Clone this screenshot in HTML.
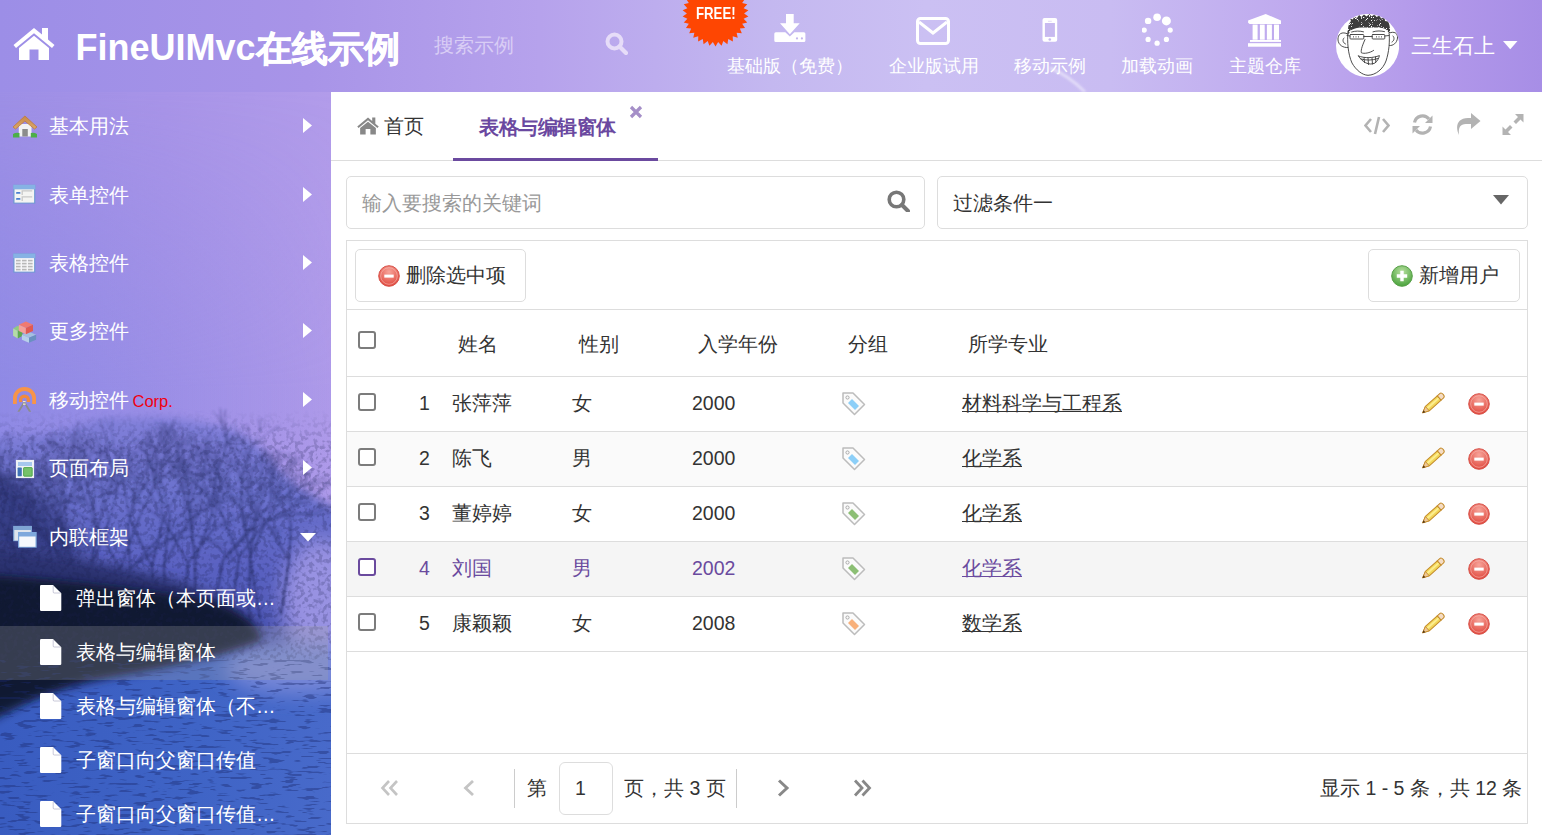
<!DOCTYPE html>
<html><head><meta charset="utf-8">
<style>
*{box-sizing:border-box;margin:0;padding:0}
html,body{width:1542px;height:835px;overflow:hidden;background:#fff}
body{font-family:"Liberation Sans",sans-serif;position:relative;color:#333}
.a{position:absolute;white-space:nowrap}
#hdr{left:0;top:0;width:1542px;height:92px;background:linear-gradient(90deg,#9c8ee7 0%,#a894e8 20%,#b6a2ec 35%,#c4b8f0 50%,#cbc0f3 60%,#c9bcf2 72%,#bea8ee 85%,#b298ea 93%,#a78ee6 100%)}
#side{left:0;top:0;width:331px;height:835px;overflow:hidden}
#hdr{z-index:2}
#main{left:331px;top:92px;width:1211px;height:743px;background:#fff}
.hl{color:#fff;font-size:17.6px;line-height:20px}
.si{color:#fff;font-size:19.5px;line-height:22px}
.t{font-size:19.5px;line-height:22px;color:#333}
.bd{border:1px solid #ddd}
</style></head><body>
<!-- HEADER -->
<div id="hdr" class="a">
  <svg class="a" style="left:13px;top:27px" width="42" height="34" viewBox="0 0 42 34"><path d="M21 1 L0.5 18 L3 21 L21 6.2 L39 21 L41.5 18 L35 12.6 L35 1 L29 1 L29 7.5 Z" fill="#fff"/><path d="M6 21 L21 8.8 L36 21 L36 33 L25.5 33 L25.5 22.5 L16.5 22.5 L16.5 33 L6 33 Z" fill="#fff"/></svg>
  <div class="a" style="left:75.5px;top:28px;font-size:36px;line-height:40px;font-weight:bold;color:#fff">FineUIMvc<span style="-webkit-text-stroke:0.6px #fff;position:relative;top:0.5px">在线示例</span></div>
  <div class="a" style="left:434px;top:34px;font-size:19.5px;line-height:22px;color:#d9cdf5">搜索示例</div>
  <svg class="a" style="left:605px;top:32px" width="23" height="23" viewBox="0 0 23 23"><circle cx="9.5" cy="9.5" r="7" stroke="#e6dcf8" stroke-width="4" fill="none"/><path d="M14.5 14.5 L21 21" stroke="#e6dcf8" stroke-width="4.2" stroke-linecap="round"/></svg>
  <svg class="a" style="left:1030px;top:60px" width="70" height="32" viewBox="0 0 70 32"><path d="M20 8 C35 14 45 22 55 32" stroke="#fff" stroke-width="3" fill="none" opacity="0.45" style="filter:blur(1px)"/></svg>
  <!-- FREE badge -->
  <svg class="a" style="left:682px;top:-21px" width="67" height="69" viewBox="0 0 67 69"><polygon points="33.50,1.40 36.14,5.92 39.56,1.96 41.33,6.89 45.42,3.63 46.25,8.80 50.87,6.34 50.74,11.58 55.73,10.01 54.64,15.13 59.83,14.51 57.82,19.34 63.04,19.69 60.17,24.07 65.24,25.37 61.61,29.14 66.36,31.36 62.10,34.40 66.36,37.44 61.61,39.66 65.24,43.43 60.17,44.73 63.04,49.11 57.82,49.46 59.83,54.29 54.64,53.67 55.73,58.79 50.74,57.22 50.87,62.46 46.25,60.00 45.42,65.17 41.33,61.91 39.56,66.84 36.14,62.88 33.50,67.40 30.86,62.88 27.44,66.84 25.67,61.91 21.58,65.17 20.75,60.00 16.13,62.46 16.26,57.22 11.27,58.79 12.36,53.67 7.17,54.29 9.18,49.46 3.96,49.11 6.83,44.73 1.76,43.43 5.39,39.66 0.64,37.44 4.90,34.40 0.64,31.36 5.39,29.14 1.76,25.37 6.83,24.07 3.96,19.69 9.18,19.34 7.17,14.51 12.36,15.13 11.27,10.01 16.26,11.58 16.13,6.34 20.75,8.80 21.58,3.63 25.67,6.89 27.44,1.96 30.86,5.92" fill="#fe4602"/></svg>
  <div class="a" style="left:696px;top:4px;font-size:16.5px;line-height:18px;font-weight:bold;color:#fff;transform:scaleX(0.8);transform-origin:0 0">FREE!</div>
  <!-- nav icons -->
  <svg class="a" style="left:774px;top:13px" width="32" height="30" viewBox="0 0 32 30"><path d="M12 1 H19.7 V10.3 H25.7 L15.85 21.3 L6 10.3 H12 Z" fill="#fff"/><path d="M1.8 19.2 H11.3 L15.85 23.6 L20.4 19.2 H29.9 Q31.4 19.2 31.4 20.7 V27.5 Q31.4 29 29.9 29 H1.8 Q0.3 29 0.3 27.5 V20.7 Q0.3 19.2 1.8 19.2 Z" fill="#fff"/><circle cx="23" cy="25.4" r="1.1" fill="#c4b6ee"/><circle cx="27.9" cy="25.4" r="1.1" fill="#c4b6ee"/></svg>
  <div class="a hl" style="left:727px;top:56px">基础版（免费）</div>
  <svg class="a" style="left:916px;top:17px" width="34" height="28" viewBox="0 0 34 28"><rect x="1.5" y="1.5" width="31" height="25" rx="3" stroke="#fff" stroke-width="3" fill="none"/><path d="M3 5 L17 16 L31 5" stroke="#fff" stroke-width="3" fill="none"/></svg>
  <div class="a hl" style="left:889px;top:56px">企业版试用</div>
  <svg class="a" style="left:1042px;top:17px" width="16" height="26" viewBox="0 0 16 26"><path d="M2.5 1 H13.2 Q15.2 1 15.2 3 V22.7 Q15.2 24.7 13.2 24.7 H2.5 Q0.5 24.7 0.5 22.7 V3 Q0.5 1 2.5 1 Z" fill="#fff"/><rect x="2.9" y="6" width="10" height="13.9" fill="#c8baf0"/><circle cx="7.8" cy="22.5" r="1.3" fill="#c8baf0"/><rect x="6" y="3.8" width="3.8" height="0.9" fill="#e0d8f6"/></svg>
  <div class="a hl" style="left:1014px;top:56px">移动示例</div>
  <svg class="a" style="left:1142px;top:13px" width="32" height="34" viewBox="0 0 32 34"><g fill="#fff"><circle cx="15.1" cy="4.2" r="3.8"/><circle cx="24.4" cy="7.9" r="4.5"/><circle cx="28.2" cy="17.1" r="2.6"/><circle cx="24.4" cy="26.4" r="2.6"/><circle cx="15.1" cy="30.2" r="2.6"/><circle cx="6.1" cy="26.4" r="2.6"/><circle cx="2.2" cy="17.1" r="2.6"/><circle cx="6.1" cy="7.9" r="3.2"/></g></svg>
  <div class="a hl" style="left:1121px;top:56px">加载动画</div>
  <svg class="a" style="left:1247px;top:13px" width="35" height="35" viewBox="0 0 35 35"><g fill="#fff"><path d="M1.1 7.6 L18.7 1 L34 7.6 V10.6 Q34 11.1 33.5 11.1 H2.6 L1.1 9.8 Z"/><rect x="5.6" y="11.6" width="5" height="15.1"/><rect x="12.9" y="11.6" width="4.8" height="15.1"/><rect x="19.9" y="11.6" width="5" height="15.1"/><rect x="27" y="11.6" width="5" height="15.1"/><rect x="3" y="27" width="31" height="1.9"/><rect x="1" y="30.2" width="33" height="3.5"/></g></svg>
  <div class="a hl" style="left:1229px;top:56px">主题仓库</div>
  <!-- avatar -->
  <svg class="a" style="left:1336px;top:14px" width="63" height="63" viewBox="0 0 63 63"><defs><clipPath id="avc"><circle cx="31.6" cy="31.5" r="31.6"/></clipPath></defs>
<circle cx="31.6" cy="31.5" r="31.6" fill="#fff"/><g clip-path="url(#avc)">
<g fill="none" stroke="#3a3a3a" stroke-width="0.9" stroke-linecap="round" stroke-linejoin="round">
<path d="M12 17 C11 28 12 40 16 49 C20 56 26 61 32 61.3 C40 61 47 55 50 47 C53 38 54 28 53 17"/>
<path d="M11.8 20 C6 17 1.5 20 2 26 C2.5 31 7 34 12 33.5 M8 24 C6 26 7 29 9.5 30"/>
<path d="M53.5 19 C58 17 62 19 61.5 24 C61 29 57 32 53.5 31.5 M57 22 C59 24 58 27 56 28"/>
<path d="M15.6 18 C19 16.8 24 16.8 27.5 17.8 M37 17.8 C41 16.6 45 16.8 48.5 17.6"/>
<rect x="14" y="20.5" width="13.8" height="4.5" rx="0.8"/>
<rect x="36.2" y="20.5" width="12.6" height="4.5" rx="0.8"/>
<path d="M27.8 22.5 H36.2 M14 22 L11 21.5 M48.8 22 L53 21.5"/>
<path d="M29 25.5 C27 30 24.5 36 25.4 38.8 C28 40 34 39 37.6 36.4"/>
<path d="M22.5 42 C26 48 33 52 39 49 C41.5 47 43 44 43.4 41.6 C37 44 29 44.5 22.5 42 Z"/>
<path d="M25 45 C30 46.5 36 46.5 42 44.5 M28 43.5 L28.5 48.5 M32 44 L32.5 50.5 M36 44 L36.5 50 M39.5 43 L39.8 48"/>
</g>
<defs><filter id="hairf" x="0" y="0" width="100%" height="100%"><feTurbulence type="fractalNoise" baseFrequency="0.9" numOctaves="1" seed="5" result="n"/><feColorMatrix in="n" type="matrix" values="0 0 0 0 1  0 0 0 0 1  0 0 0 0 1  0 0 0 -10 3.9" result="w"/><feComposite in="w" in2="SourceGraphic" operator="in" result="wm"/><feMerge><feMergeNode in="SourceGraphic"/><feMergeNode in="wm"/></feMerge></filter></defs>
<path d="M12.5 21 C11 14 13 9 15 7 L14 4.5 L17 5.5 L18 2.5 L21 4 L23 1 L25.5 3 L28 0.5 L30.5 2.5 L33.5 0 L35.5 2.5 L38.5 0.5 L40.5 3 L43.5 1.5 L45 4.5 L48.5 3.5 L49 7 L52 7.5 C54 11 54.5 16 53.5 21 C52 16.5 50 14.5 46 14 C40 13 34 14 28 13.5 C22 13 17 14.5 14.5 16.5 C13.5 18 13 19.5 12.5 21 Z" fill="#3c3c3c" filter="url(#hairf)"/>
</g><g fill="#888"><rect x="17" y="22" width="1" height="1.6"/><rect x="19.5" y="22" width="1" height="1.6"/><rect x="22" y="22" width="1" height="1.6"/><rect x="40" y="22" width="1" height="1.6"/><rect x="42.5" y="22" width="1" height="1.6"/><rect x="45" y="22" width="1" height="1.6"/></g>
</svg>
  <div class="a" style="left:1411px;top:34px;font-size:20.7px;line-height:23px;color:#fff">三生石上</div>
  <svg class="a" style="left:1503px;top:41px" width="15" height="9" viewBox="0 0 15 9"><path d="M0 0 H14.5 L7.25 8.2 Z" fill="#fff"/></svg>
</div>

<!-- SIDEBAR -->
<div id="side" class="a">
  <svg class="a" style="left:0;top:92px" width="331" height="743" viewBox="0 92 331 743">
    <defs>
      <linearGradient id="sg" x1="0" y1="0" x2="1" y2="0">
        <stop offset="0" stop-color="#9d8fe6"/>
        <stop offset="0.5" stop-color="#a894e8"/>
        <stop offset="1" stop-color="#b29cea"/>
      </linearGradient>
      <linearGradient id="sgb" x1="0" y1="0" x2="1" y2="0">
        <stop offset="0" stop-color="#8a88e4" stop-opacity="0.75"/>
        <stop offset="1" stop-color="#8a88e4" stop-opacity="0.1"/>
      </linearGradient>
      <linearGradient id="sgm" x1="0" y1="0" x2="0" y2="1">
        <stop offset="0" stop-color="#fff" stop-opacity="0"/>
        <stop offset="0.4" stop-color="#fff" stop-opacity="1"/>
        <stop offset="1" stop-color="#fff" stop-opacity="1"/>
      </linearGradient>
      <mask id="sgmk"><rect x="0" y="92" width="331" height="743" fill="url(#sgm)"/></mask>
      <linearGradient id="crown" x1="0" y1="0" x2="0" y2="1">
        <stop offset="0" stop-color="#8280da"/>
        <stop offset="0.3" stop-color="#6c72cd"/>
        <stop offset="0.65" stop-color="#5860c0"/>
        <stop offset="1" stop-color="#4650aa"/>
      </linearGradient>
      <linearGradient id="road" x1="0" y1="0" x2="1" y2="0">
        <stop offset="0" stop-color="#395cc0"/>
        <stop offset="0.6" stop-color="#3f64c6"/>
        <stop offset="1" stop-color="#486aca"/>
      </linearGradient>
      <filter id="bl" x="-30%" y="-30%" width="160%" height="160%"><feGaussianBlur stdDeviation="10"/></filter>
      <filter id="bl2" x="-30%" y="-30%" width="160%" height="160%"><feGaussianBlur stdDeviation="6"/></filter>
      <filter id="bl05" x="-5%" y="-5%" width="110%" height="110%"><feGaussianBlur stdDeviation="0.8"/></filter>
      <filter id="bl3" x="-30%" y="-30%" width="160%" height="160%"><feGaussianBlur stdDeviation="4"/></filter>
      <filter id="speck" x="0" y="0" width="100%" height="100%">
        <feTurbulence type="fractalNoise" baseFrequency="0.22" numOctaves="2" seed="7" result="n"/>
        <feColorMatrix in="n" type="matrix" values="0 0 0 0 0  0 0 0 0 0  0 0 0 0 0  0 0 0 -6 3.1" result="a"/>
        <feComposite in="SourceGraphic" in2="a" operator="in"/>
      </filter>
      <filter id="speck2" x="0" y="0" width="100%" height="100%">
        <feTurbulence type="fractalNoise" baseFrequency="0.06 0.35" numOctaves="2" seed="11" result="n"/>
        <feColorMatrix in="n" type="matrix" values="0 0 0 0 0  0 0 0 0 0  0 0 0 0 0  0 0 0 -12 5.0" result="a"/>
        <feComposite in="SourceGraphic" in2="a" operator="in"/>
      </filter>
      <linearGradient id="fadeTop" x1="0" y1="0" x2="0" y2="1">
        <stop offset="0" stop-color="#fff" stop-opacity="0"/>
        <stop offset="0.15" stop-color="#fff" stop-opacity="1"/>
        <stop offset="1" stop-color="#fff" stop-opacity="1"/>
      </linearGradient>
      <mask id="mk"><rect x="0" y="410" width="331" height="250" fill="url(#fadeTop)"/></mask>
    </defs>
    <rect x="0" y="92" width="331" height="743" fill="url(#sg)"/>
    <rect x="0" y="92" width="331" height="743" fill="url(#sgb)" mask="url(#sgmk)"/>
    <rect x="0" y="640" width="331" height="200" fill="url(#road)"/>
    <g filter="url(#bl3)">
      <path d="M-10 440 C10 432 40 438 70 428 C90 420 110 416 140 418 C165 415 190 420 215 425 C240 430 258 442 275 465 C292 485 315 500 340 510 L340 650 L-10 660 Z" fill="url(#crown)"/>
    </g>
    <g filter="url(#bl)">
      <ellipse cx="322" cy="600" rx="40" ry="62" fill="#9892e2"/>
      <ellipse cx="300" cy="668" rx="75" ry="26" fill="#7888d8"/>
      <path d="M-20 470 C30 480 70 520 90 560 L-20 565 Z" fill="#383f88"/>
    </g>
    <g opacity="0.55" filter="url(#bl05)"><path d="M50 498L61 497M61 497L69 495M61 497L69 498M50 498L55 486M55 486L60 479M55 486L60 480M55 486L60 479M32 493L21 487M21 487L11 484M21 487L12 487M32 493L33 481M33 481L33 471M33 481L39 475M20 491L9 483M9 483L2 479M9 483L3 478M20 491L11 480M11 480L11 471M11 480L11 469M31 484L22 472M22 472L15 463M22 472L16 464M31 484L40 471M40 471L39 459M40 471L39 459M32 485L27 470M27 470L30 460M27 470L25 460M27 470L31 458M32 485L34 472M34 472L30 464M34 472L40 465M4 498L-1 489M-1 489L-5 483M-1 489L-2 482M4 498L6 485M6 485L12 480M6 485L12 478M6 485L3 478M7 498L7 488M7 488L9 481M7 488L5 481M7 498L3 486M3 486L-3 480M3 486L-4 480M-25 495L-41 490M-41 490L-52 491M-41 490L-53 493M-25 495L-30 483M-30 483L-31 473M-30 483L-28 473M-25 495L-38 489M-38 489L-47 485M-38 489L-48 485M-8 491L-11 479M-11 479L-11 471M-11 479L-17 474M-8 491L-8 478M-8 478L-7 469M-8 478L-8 468M-8 491L-2 482M-2 482L3 475M-2 482L2 476M-13 498L-20 490M-20 490L-27 486M-20 490L-26 485M-20 490L-23 483M-13 498L-12 488M-12 488L-9 481M-12 488L-9 481M-9 495L-17 485M-17 485L-22 478M-17 485L-23 479M-9 495L-6 482M-6 482L-7 474M-6 482L-8 473M-9 495L-6 482M-6 482L-5 472M-6 482L1 474M-6 482L1 476M-2 497L10 490M10 490L17 485M10 490L15 481M10 490L19 486M-2 497L8 487M8 487L19 486M8 487L11 479M8 487L16 484M20 477L19 462M19 462L24 454M19 462L19 451M20 477L33 468M33 468L37 457M33 468L42 461M7 480L0 468M0 468L-5 461M0 468L-4 460M7 480L8 466M8 466L13 459M8 466L13 457M16 475L9 459M9 459L10 448M9 459L0 449M16 475L23 462M23 462L21 451M23 462L33 457M9 475L11 460M11 460L7 451M11 460L13 450M9 475L3 460M3 460L5 449M3 460L-3 452M-4 478L-5 459M-5 459L-11 446M-5 459L-4 444M-4 478L-14 461M-14 461L-25 454M-14 461L-21 450M-62 509L-78 507M-78 507L-87 505M-78 507L-88 506M-78 507L-86 512M-62 509L-74 502M-74 502L-84 500M-74 502L-83 500M-60 516L-70 511M-70 511L-78 508M-70 511L-75 505M-60 516L-71 517M-71 517L-78 517M-71 517L-78 517M-60 516L-70 522M-70 522L-77 528M-70 522L-79 525M-66 498L-77 485M-77 485L-85 480M-77 485L-88 483M-66 498L-76 487M-76 487L-78 475M-76 487L-76 476M-76 487L-86 485M-52 494L-63 486M-63 486L-67 477M-63 486L-71 480M-52 494L-55 482M-55 482L-56 472M-55 482L-52 473M-52 494L-49 479M-49 479L-50 468M-49 479L-48 470M-46 488L-38 474M-38 474L-36 465M-38 474L-28 470M-46 488L-37 473M-37 473L-25 469M-37 473L-34 462M-37 473L-32 463M61 500L73 497M73 497L82 501M73 497L81 494M73 497L80 491M61 500L76 503M76 503L86 500M76 503L86 497M64 502L78 500M78 500L87 505M78 500L86 495M64 502L80 503M80 503L91 504M80 503L88 510M50 494L50 481M50 481L46 474M50 481L47 473M50 481L45 473M50 494L55 483M55 483L60 477M55 483L56 474M64 503L75 491M75 491L77 480M75 491L86 489M64 503L77 498M77 498L86 501M77 498L86 495M77 498L86 500M37 491L39 477M39 477L46 470M39 477L43 468M37 491L44 478M44 478L50 469M44 478L49 469M40 495L44 484M44 484L43 476M44 484L51 479M44 484L47 478M40 495L51 487M51 487L54 477M51 487L55 478M49 489L53 474M53 474L49 466M53 474L60 465M49 489L55 475M55 475L55 464M55 475L63 468M45 491L51 479M51 479L49 469M51 479L53 470M45 491L55 482M55 482L61 475M55 482L59 473M55 482L65 481M53 496L68 495M68 495L77 502M68 495L77 499M53 496L62 483M62 483L69 474M62 483L68 474M62 483L66 473M-30 497L-34 479M-34 479L-34 467M-34 479L-38 467M-30 497L-43 486M-43 486L-48 477M-43 486L-46 475M-32 506L-40 493M-40 493L-50 488M-40 493L-48 488M-40 493L-40 483M-32 506L-47 503M-47 503L-57 499M-47 503L-54 497M-39 514L-52 505M-52 505L-57 494M-52 505L-62 498M-39 514L-54 515M-54 515L-65 515M-54 515L-63 512M-34 504L-51 499M-51 499L-62 493M-51 499L-61 492M-34 504L-45 494M-45 494L-53 487M-45 494L-55 494M-45 494L-53 487M-2 496L4 483M4 483L13 477M4 483L12 477M-2 496L-0 483M-0 483L4 475M-0 483L-3 474M-2 496L-10 485M-10 485L-18 480M-10 485L-16 478M-10 485L-11 476M-4 495L-11 482M-11 482L-17 475M-11 482L-12 472M-11 482L-16 474M-4 495L-1 483M-1 483L4 476M-1 483L-2 474M-20 506L-34 502M-34 502L-40 494M-34 502L-43 505M-20 506L-33 507M-33 507L-43 508M-33 507L-42 506M-22 517L-35 518M-35 518L-43 523M-35 518L-44 514M-35 518L-43 519M-22 517L-33 513M-33 513L-41 515M-33 513L-38 506M-33 513L-39 505M-22 517L-35 522M-35 522L-43 526M-35 522L-40 529M17 492L26 484M26 484L34 483M26 484L30 477M17 492L13 481M13 481L15 474M13 481L6 476M13 481L12 474M20 493L25 481M25 481L31 475M25 481L30 473M25 481L33 477M20 493L26 482M26 482L26 474M26 482L27 475M26 482L28 474M41 483L24 481M24 481L15 476M24 481L15 475M41 483L26 475M26 475L15 476M26 475L18 466M50 481L45 467M45 467L36 463M45 467L45 456M50 481L39 471M39 471L31 467M39 471L30 467M54 475L57 460M57 460L57 449M57 460L65 454M54 475L39 466M39 466L35 456M39 466L31 458M58 469L64 453M64 453L73 447M64 453L62 442M58 469L55 454M55 454L46 446M55 454L51 442M58 469L46 456M46 456L40 445M46 456L45 444M46 456L41 444M27 493L21 481M21 481L23 472M21 481L16 473M27 493L28 479M28 479L34 471M28 479L28 471M25 494L27 482M27 482L23 474M27 482L24 472M25 494L12 485M12 485L1 482M12 485L7 475M47 488L43 474M43 474L39 466M43 474L41 465M47 488L53 473M53 473L55 463M53 473L59 463M47 488L48 474M48 474L44 464M48 474L43 467M42 487L46 472M46 472L43 462M46 472L54 464M42 487L39 475M39 475L39 465M39 475L34 469M45 461L53 447M53 447L62 441M53 447L56 436M45 461L49 444M49 444L54 435M49 444L49 432M37 466L26 454M26 454L24 444M26 454L15 453M37 466L32 449M32 449L33 436M32 449L34 438M32 449L31 436M69 458L76 437M76 437L77 421M76 437L79 421M69 458L54 446M54 446L41 442M54 446L44 438M69 458L62 439M62 439L61 424M62 439L52 430M79 463L88 449M88 449L96 440M88 449L92 437M79 463L93 453M93 453L95 442M93 453L105 449M93 453L105 452M79 463L90 452M90 452L91 442M90 452L98 446M75 459L71 442M71 442L68 430M71 442L75 431M75 459L86 442M86 442L96 432M86 442L100 437M75 459L86 444M86 444L96 437M86 444L92 431M84 476L87 461M87 461L85 450M87 461L93 454M84 476L98 471M98 471L108 473M98 471L109 473M88 481L104 478M104 478L115 475M104 478L113 480M104 478L111 469M88 481L97 472M97 472L102 466M97 472L106 469M-4 466L-8 448M-8 448L-14 439M-8 448L-4 438M-8 448L-8 435M-4 466L0 444M0 444L9 434M0 444L7 432M-1 463L8 444M8 444L14 431M8 444L9 431M-1 463L-17 450M-17 450L-26 439M-17 450L-20 436M-17 450L-19 437M-1 478L3 463M3 463L9 454M3 463L-0 452M-1 478L-5 463M-5 463L-13 455M-5 463L-11 455M-1 478L-3 461M-3 461L5 450M-3 461L-9 452M-3 461L-7 449M-10 485L-14 470M-14 470L-16 462M-14 470L-9 461M-10 485L-19 474M-19 474L-21 465M-19 474L-30 472M-9 543L-23 553M-23 553L-29 563M-23 553L-32 559M-9 543L-24 549M-24 549L-31 558M-24 549L-34 556M-24 549L-29 558M-5 518L-15 509M-15 509L-18 500M-15 509L-23 506M-15 509L-22 508M-5 518L-10 506M-10 506L-11 498M-10 506L-10 497M16 493L6 482M6 482L-2 475M6 482L5 471M16 493L7 485M7 485L4 477M7 485L-0 481M7 485L2 480M18 489L19 475M19 475L13 466M19 475L21 465M19 475L18 464M18 489L5 482M5 482L-5 482M5 482L-2 472M28 488L24 474M24 474L16 468M24 474L17 469M24 474L15 469M28 488L37 478M37 478L46 475M37 478L40 471M28 488L25 474M25 474L25 466M25 474L27 464M6 491L3 475M3 475L-5 467M3 475L-7 468M6 491L-11 488M-11 488L-24 489M-11 488L-22 485M-11 488L-21 482M22 488L26 474M26 474L33 466M26 474L24 464M26 474L28 463M22 488L25 476M25 476L30 471M25 476L24 467M25 476L29 469M19 479L15 462M15 462L9 452M15 462L11 452M19 479L5 475M5 475L-4 470M5 475L-5 473M5 475L-4 472M11 487L-6 483M-6 483L-18 484M-6 483L-16 485M11 487L-3 480M-3 480L-9 474M-3 480L-14 478M71 464L82 455M82 455L86 447M82 455L87 448M71 464L70 450M70 450L64 443M70 450L75 440M54 463L51 447M51 447L46 436M51 447L52 435M54 463L45 450M45 450L37 444M45 450L35 445M78 468L78 454M78 454L76 445M78 454L79 445M78 468L92 466M92 466L101 464M92 466L99 471M42 483L32 476M32 476L28 469M32 476L26 471M42 483L30 477M30 477L22 479M30 477L22 473M43 480L28 476M28 476L18 469M28 476L16 477M28 476L19 471M43 480L33 472M33 472L27 464M33 472L27 463M64 480L64 466M64 466L60 458M64 466L68 456M64 480L74 470M74 470L82 466M74 470L80 463M33 484L30 472M30 472L33 465M30 472L29 463M33 484L34 471M34 471L34 463M34 471L31 462M30 483L19 474M19 474L9 474M19 474L9 472M19 474L14 464M30 483L16 477M16 477L6 474M16 477L9 472M30 483L26 469M26 469L24 460M26 469L22 459M70 472L74 458M74 458L72 447M74 458L70 448M70 472L64 457M64 457L56 451M64 457L57 450M50 475L46 462M46 462L41 454M46 462L39 456M50 475L44 461M44 461L48 452M44 461L37 453M113 472L118 459M118 459L116 449M118 459L126 451M113 472L120 459M120 459L121 448M120 459L123 447M120 459L130 455M100 472L101 459M101 459L98 449M101 459L100 448M100 472L91 462M91 462L85 456M91 462L89 454M100 472L98 459M98 459L102 450M98 459L103 452M118 472L119 457M119 457L126 447M119 457L124 446M119 457L126 449M118 472L127 461M127 461L137 458M127 461L132 452M114 472L106 459M106 459L107 449M106 459L103 450M114 472L108 458M108 458L106 449M108 458L108 447M74 465L72 450M72 450L74 439M72 450L77 441M74 465L57 461M57 461L44 462M57 461L48 455M91 464L82 451M82 451L78 440M82 451L71 445M91 464L84 451M84 451L81 442M84 451L74 445M81 459L87 444M87 444L83 433M87 444L85 434M81 459L78 442M78 442L80 429M78 442L71 434M78 442L69 433M80 459L64 448M64 448L51 439M64 448L52 441M64 448L52 439M80 459L82 441M82 441L84 428M82 441L78 430M125 481L138 470M138 470L148 462M138 470L143 460M138 470L141 460M125 481L136 470M136 470L140 460M136 470L146 465M114 474L124 463M124 463L132 459M124 463L130 455M114 474L108 459M108 459L108 449M108 459L100 452M121 481L135 477M135 477L144 471M135 477L146 475M121 481L129 470M129 470L136 465M129 470L136 466M113 479L121 470M121 470L127 465M121 470L129 466M113 479L113 468M113 468L111 460M113 468L113 461M117 481L130 473M130 473L139 468M130 473L139 474M130 473L135 466M117 481L117 467M117 467L120 459M117 467L116 459M210 525L225 522M225 522L234 519M225 522L232 513M225 522L233 515M210 525L224 528M224 528L235 525M224 528L232 532M201 507L206 494M206 494L208 485M206 494L208 486M201 507L202 493M202 493L200 484M202 493L203 482M201 512L213 507M213 507L216 501M213 507L219 503M213 507L221 505M201 512L209 502M209 502L208 493M209 502L213 495M197 508L192 496M192 496L192 485M192 496L187 486M197 508L200 495M200 495L207 489M200 495L201 485M200 495L208 489M217 546L227 556M227 556L229 566M227 556L234 562M217 546L230 552M230 552L235 560M230 552L240 554M217 543L229 552M229 552L232 561M229 552L234 561M217 543L231 542M231 542L239 546M231 542L240 544M155 479L169 472M169 472L178 465M169 472L172 464M169 472L180 468M155 479L171 477M171 477L180 474M171 477L180 483M147 470L151 455M151 455L160 446M151 455L148 444M147 470L163 459M163 459L176 455M163 459L175 454M163 459L170 449M148 481L156 468M156 468L163 460M156 468L165 466M148 481L147 465M147 465L146 454M147 465L148 454M147 465L141 455M147 480L154 467M154 467L161 460M154 467L163 463M147 480L149 464M149 464L155 455M149 464L150 454M203 489L218 478M218 478L228 468M218 478L231 472M218 478L226 468M203 489L219 481M219 481L230 478M219 481L226 472M191 488L203 478M203 478L209 470M203 478L211 471M191 488L196 473M196 473L205 466M196 473L205 467M191 488L184 475M184 475L182 466M184 475L184 465M210 502L219 488M219 488L225 477M219 488L225 478M210 502L225 509M225 509L233 516M225 509L234 516M210 502L228 502M228 502L240 499M228 502L238 496M207 509L211 497M211 497L219 492M211 497L209 489M207 509L212 496M212 496L213 486M212 496L214 488M206 506L218 502M218 502L226 501M218 502L225 499M206 506L218 503M218 503L226 503M218 503L225 502M206 506L220 501M220 501L228 495M220 501L230 498M43 495L34 480M34 480L34 469M34 480L29 468M43 495L27 488M27 488L15 488M27 488L15 483M54 486L43 477M43 477L35 472M43 477L35 470M54 486L41 479M41 479L32 473M41 479L37 471M41 479L33 472M54 486L46 472M46 472L46 462M46 472L49 461M69 469L60 455M60 455L57 445M60 455L56 444M69 469L61 454M61 454L50 445M61 454L50 445M78 464L75 446M75 446L74 432M75 446L81 435M78 464L81 448M81 448L77 438M81 448L88 439M72 465L70 449M70 449L63 442M70 449L67 439M72 465L75 448M75 448L72 435M75 448L70 438M72 465L61 448M61 448L47 442M61 448L49 440M83 468L84 453M84 453L88 444M84 453L78 444M83 468L69 461M69 461L58 463M69 461L62 454M69 461L62 455M93 464L100 449M100 449L101 439M100 449L109 442M100 449L97 438M93 464L105 451M105 451L114 442M105 451L114 440M105 451L117 449M93 464L103 451M103 451L112 446M103 451L112 443M178 467L195 468M195 468L208 470M195 468L207 473M178 467L195 455M195 455L202 443M195 455L202 442M178 467L192 455M192 455L204 455M192 455L206 454M192 455L202 447M156 457L162 442M162 442L171 436M162 442L162 431M156 457L158 440M158 440L155 430M158 440L166 430M158 440L162 428M176 465L180 449M180 449L184 438M180 449L189 441M180 449L186 438M176 465L179 445M179 445L173 432M179 445L184 432M165 456L163 438M163 438L161 427M163 438L169 426M165 456L174 438M174 438L182 425M174 438L171 425M174 438L173 423M165 456L167 435M167 435L172 421M167 435L176 422M148 457L151 441M151 441L149 430M151 441L148 429M148 457L135 443M135 443L122 440M135 443L130 430M196 479L209 471M209 471L220 469M209 471L215 463M196 479L211 472M211 472L216 462M211 472L221 473M185 476L193 467M193 467L200 464M193 467L195 458M185 476L181 464M181 464L178 455M181 464L178 456M184 473L179 460M179 460L176 451M179 460L174 450M184 473L192 458M192 458L203 454M192 458L191 447M192 458L190 449M167 460L183 451M183 451L196 448M183 451L190 441M183 451L194 450M167 460L172 443M172 443L176 430M172 443L182 435M164 458L167 440M167 440L177 430M167 440L166 427M164 458L171 442M171 442L168 432M171 442L169 430M164 458L178 446M178 446L188 438M178 446L190 439M178 446L189 442M154 463L172 461M172 461L183 454M172 461L183 453M172 461L183 467M154 463L167 449M167 449L179 444M167 449L179 445M152 461L158 444M158 444L168 438M158 444L163 433M152 461L164 448M164 448L165 436M164 448L174 440M133 455L147 440M147 440L160 432M147 440L155 430M133 455L148 447M148 447L152 436M148 447L156 437M115 454L112 432M112 432L113 417M112 432L105 418M115 454L105 435M105 435L98 421M105 435L101 419M111 462L106 449M106 449L105 440M106 449L109 440M111 462L100 449M100 449L90 441M100 449L95 437M111 462L96 453M96 453L90 445M96 453L89 445M149 463L146 445M146 445L145 430M146 445L142 432M149 463L141 449M141 449L143 439M141 449L138 440M141 449L137 438M152 466L139 461M139 461L130 462M139 461L130 460M152 466L139 457M139 457L132 448M139 457L130 450M139 457L131 451M152 466L146 452M146 452L137 446M146 452L141 443M146 452L142 444M152 464L156 451M156 451L152 442M156 451L158 442M156 451L160 442M152 464L145 452M145 452L139 446M145 452L137 447M152 464L155 449M155 449L153 439M155 449L163 439M155 449L162 441M157 460L148 445M148 445L148 433M148 445L148 432M157 460L160 444M160 444L166 435M160 444L159 433M158 462L151 446M151 446L140 441M151 446L148 435M151 446L152 435M158 462L152 447M152 447L143 441M152 447L141 441M215 478L221 461M221 461L226 447M221 461L230 450M215 478L219 463M219 463L219 451M219 463L214 452M219 463L214 453M224 482L230 468M230 468L232 458M230 468L240 461M224 482L228 468M228 468L232 457M228 468L231 458M224 482L233 469M233 469L242 461M233 469L239 460M187 470L197 462M197 462L207 461M197 462L207 461M187 470L195 457M195 457L197 447M195 457L196 447M173 467L164 451M164 451L153 447M164 451L166 440M173 467L163 452M163 452L153 447M163 452L162 439M173 467L178 452M178 452L177 439M178 452L179 441M132 474L128 460M128 460L129 449M128 460L128 449M132 474L120 466M120 466L112 462M120 466L115 458M125 474L119 456M119 456L122 444M119 456L119 444M125 474L110 462M110 462L107 451M110 462L106 449M110 462L106 449M128 486L121 472M121 472L115 465M121 472L111 466M128 486L115 483M115 483L108 487M115 483L110 475M121 494L105 494M105 494L94 490M105 494L93 497M121 494L108 494M108 494L100 491M108 494L99 497M108 494L101 488M128 484L112 480M112 480L100 478M112 480L100 482M112 480L100 478M128 484L130 467M130 467L131 456M130 467L130 455M263 519L279 517M279 517L286 508M279 517L291 517M263 519L273 531M273 531L276 542M273 531L281 539M273 531L280 540M263 511L278 506M278 506L287 499M278 506L287 502M278 506L290 502M263 511L278 512M278 512L289 515M278 512L287 515M278 512L286 517M262 522L273 529M273 529L280 536M273 529L281 531M262 522L273 527M273 527L280 534M273 527L279 532M273 527L282 528M234 485L245 473M245 473L255 466M245 473L255 467M234 485L245 473M245 473L250 462M245 473L255 466M221 478L226 462M226 462L225 451M226 462L232 451M221 478L214 465M214 465L216 455M214 465L209 456M211 481L205 469M205 469L199 462M205 469L204 460M211 481L198 475M198 475L192 468M198 475L189 477M211 481L212 469M212 469L213 461M212 469L206 462M205 466L206 451M206 451L204 441M206 451L209 441M206 451L205 443M205 466L207 454M207 454L206 447M207 454L202 446M214 468L226 456M226 456L235 449M226 456L235 448M214 468L226 462M226 462L233 456M226 462L237 461M177 451L169 438M169 438L171 429M169 438L166 428M177 451L185 438M185 438L194 433M185 438L193 431M167 452L169 433M169 433L175 420M169 433L163 422M167 452L161 435M161 435L162 424M161 435L166 423M161 435L156 426M167 452L160 437M160 437L151 428M160 437L162 427M183 453L182 437M182 437L182 427M182 437L189 428M183 453L190 442M190 442L197 437M190 442L188 431M184 453L180 438M180 438L174 430M180 438L173 429M184 453L177 438M177 438L173 427M177 438L168 430M170 451L153 445M153 445L141 443M153 445L141 443M170 451L168 434M168 434L171 424M168 434L162 425M168 434L159 426M177 447L171 429M171 429L176 418M171 429L160 420M177 447L165 431M165 431L155 421M165 431L154 427M206 455L208 436M208 436L216 425M208 436L217 426M206 455L218 446M218 446L228 441M218 446L230 444M218 446L230 445M206 455L205 440M205 440L198 430M205 440L210 432M183 467L168 463M168 463L157 464M168 463L159 461M168 463L160 458M183 467L166 466M166 466L158 458M166 466L155 473M225 450L236 433M236 433L247 424M236 433L235 420M225 450L227 434M227 434L232 424M227 434L225 423M225 450L227 433M227 433L222 422M227 433L224 420M205 455L196 444M196 444L195 433M196 444L193 435M205 455L194 446M194 446L187 440M194 446L185 444M194 446L190 436M273 478L277 462M277 462L278 451M277 462L281 452M273 478L263 463M263 463L264 450M263 463L257 452M273 478L267 462M267 462L264 450M267 462L256 456M267 462L270 450M270 479L280 465M280 465L285 453M280 465L280 453M270 479L272 462M272 462L268 453M272 462L274 450M262 486L267 472M267 472L272 463M267 472L267 462M262 486L268 473M268 473L276 467M268 473L272 464M268 473L273 466M262 486L273 476M273 476L274 465M273 476L276 466M273 476L275 467M242 482L238 469M238 469L229 463M238 469L234 459M242 482L235 471M235 471L227 464M235 471L234 462M272 478L272 464M272 464L269 453M272 464L272 454M272 478L276 463M276 463L283 452M276 463L279 451M272 478L278 463M278 463L289 457M278 463L276 450M262 473L261 459M261 459L262 450M261 459L266 450M261 459L268 451M262 473L268 458M268 458L278 450M268 458L264 446M268 458L264 446M261 473L269 461M269 461L274 453M269 461L278 456M261 473L251 460M251 460L242 456M251 460L243 452M276 477L289 473M289 473L299 475M289 473L294 466M276 477L287 466M287 466L295 457M287 466L296 462M276 477L287 468M287 468L296 468M287 468L296 463M297 500L313 495M313 495L324 500M313 495L323 490M297 500L311 490M311 490L323 490M311 490L320 483M305 514L320 511M320 511L330 510M320 511L329 506M320 511L329 506M305 514L317 506M317 506L320 496M317 506L326 505M317 506L326 501M305 514L319 508M319 508L324 498M319 508L324 498M222 461L227 444M227 444L233 435M227 444L222 433M222 461L231 448M231 448L231 438M231 448L240 444M216 463L210 451M210 451L204 446M210 451L211 443M216 463L217 448M217 448L219 437M217 448L212 438M190 472L183 459M183 459L176 452M183 459L174 455M190 472L174 468M174 468L166 461M174 468L168 460M188 477L182 465M182 465L180 456M182 465L182 456M188 477L187 463M187 463L190 452M187 463L191 454M187 463L192 453M191 479L178 476M178 476L169 479M178 476L170 473M178 476L168 477M191 479L188 466M188 466L182 459M188 466L180 460M191 479L180 473M180 473L177 466M180 473L171 473M190 480L178 475M178 475L170 470M178 475L170 477M190 480L181 469M181 469L174 463M181 469L179 460M181 469L173 467M305 495L314 482M314 482L319 473M314 482L322 477M314 482L325 478M305 495L314 485M314 485L322 483M314 485L322 481M313 515L327 507M327 507L337 508M327 507L332 497M313 515L327 513M327 513L335 513M327 513L333 506M327 513L335 512M313 499L323 489M323 489L328 481M323 489L331 483M323 489L331 485M313 499L324 486M324 486L332 481M324 486L324 474M324 486L328 477M304 491L307 478M307 478L312 470M307 478L305 470M304 491L306 477M306 477L304 467M306 477L311 468M217 456L210 445M210 445L205 438M210 445L211 436M217 456L226 444M226 444L233 438M226 444L236 441M211 457L200 448M200 448L190 447M200 448L191 445M211 457L198 447M198 447L192 436M198 447L193 435M253 445L268 433M268 433L277 426M268 433L280 426M253 445L260 430M260 430L261 418M260 430L258 419M260 430L269 424M228 443L226 424M226 424L216 415M226 424L225 410M228 443L221 424M221 424L226 410M221 424L221 410M228 443L221 422M221 422L220 408M221 422L213 411M209 472L209 457M209 457L202 450M209 457L210 446M209 472L208 459M208 459L202 451M208 459L208 449M202 475L198 462M198 462L200 452M198 462L198 452M202 475L192 464M192 464L182 463M192 464L188 454M192 464L182 462M202 475L188 474M188 474L179 477M188 474L178 470M188 474L179 468M218 467L212 452M212 452L206 443M212 452L206 442M212 452L205 444M218 467L220 452M220 452L217 441M220 452L227 444M208 475L200 464M200 464L201 453M200 464L193 459M208 475L192 473M192 473L181 474M192 473L185 466M208 475L203 461M203 461L203 451M203 461L201 452M203 461L198 451M236 457L231 443M231 443L234 434M231 443L225 433M236 457L236 443M236 443L238 433M236 443L231 434M248 458L244 444M244 444L243 434M244 444L236 439M244 444L245 434M248 458L243 445M243 445L246 437M243 445L239 437M248 458L255 443M255 443L264 439M255 443L265 436M249 457L244 443M244 443L238 434M244 443L235 437M249 457L250 439M250 439L247 427M250 439L248 425M290 480L300 468M300 468L309 460M300 468L301 457M290 480L301 475M301 475L308 472M301 475L308 474M283 476L288 462M288 462L285 453M288 462L295 454M283 476L290 465M290 465L296 459M290 465L295 458M290 465L299 463M275 475L271 461M271 461L274 451M271 461L273 453M275 475L278 461M278 461L286 455M278 461L279 452M275 475L270 463M270 463L270 453M270 463L262 457M293 491L304 486M304 486L312 482M304 486L307 478M293 491L304 491M304 491L309 495M304 491L311 493M279 484L284 475M284 475L289 469M284 475L289 470M279 484L282 474M282 474L285 469M282 474L284 468M293 487L305 485M305 485L314 485M305 485L313 483M305 485L313 480M293 487L302 481M302 481L308 477M302 481L308 480M293 499L302 503M302 503L309 507M302 503L310 503M293 499L305 499M305 499L312 495M305 499L314 496M292 491L304 484M304 484L313 482M304 484L314 483M292 491L303 486M303 486L311 485M303 486L310 485M248 470L245 456M245 456L239 449M245 456L237 449M248 470L242 457M242 457L238 449M242 457L236 449M253 471L262 460M262 460L266 452M262 460L266 449M253 471L259 458M259 458L267 453M259 458L266 451M253 471L248 459M248 459L250 449M248 459L250 450M265 478L261 466M261 466L254 462M261 466L264 457M265 478L271 470M271 470L274 464M271 470L273 463M282 485L294 479M294 479L303 476M294 479L303 479M282 485L294 486M294 486L299 492M294 486L299 491M233 496L219 498M219 498L211 495M219 498L209 496M233 496L227 485M227 485L226 476M227 485L229 476M242 491L230 486M230 486L221 486M230 486L226 479M230 486L222 481M242 491L232 487M232 487L224 488M232 487L225 486M251 487L250 473M250 473L245 466M250 473L254 466M251 487L257 478M257 478L259 469M257 478L262 473M247 490L243 481M243 481L241 473M243 481L238 476M247 490L248 480M248 480L245 475M248 480L248 474M248 480L245 475M273 486L272 473M272 473L275 464M272 473L267 465M273 486L269 474M269 474L264 469M269 474L269 467M269 487L258 483M258 483L252 478M258 483L253 476M269 487L255 482M255 482L244 481M255 482L245 478M269 487L255 483M255 483L245 486M255 483L244 481M294 480L303 470M303 470L303 461M303 470L311 468M294 480L291 466M291 466L295 458M291 466L297 457M288 477L295 464M295 464L301 455M295 464L301 457M295 464L296 453M288 477L291 462M291 462L288 453M291 462L290 452" stroke="#242a64" stroke-width="0.5" fill="none" stroke-linecap="round"/><path d="M35 540L37 511M37 511L50 498M37 511L32 493M35 540L32 507M32 507L20 491M32 507L31 484M32 507L32 485M-5 539L3 515M3 515L4 498M3 515L7 498M-5 539L-10 510M-10 510L-25 495M-10 510L-8 491M-5 539L-10 514M-10 514L-13 498M-10 514L-9 495M-10 514L-2 497M9 531L14 500M14 500L20 477M14 500L7 480M9 531L12 498M12 498L16 475M12 498L9 475M12 498L-4 478M-23 535L-44 517M-44 517L-62 509M-44 517L-60 516M-23 535L-46 512M-46 512L-66 498M-46 512L-52 494M-46 512L-46 488M27 534L42 509M42 509L61 500M42 509L64 502M27 534L45 511M45 511L50 494M45 511L64 503M13 533L26 507M26 507L37 491M26 507L40 495M13 533L30 505M30 505L49 489M30 505L45 491M30 505L53 496M10 538L-12 513M-12 513L-30 497M-12 513L-32 506M10 538L-18 522M-18 522L-39 514M-18 522L-34 504M10 538L-4 515M-4 515L-2 496M-4 515L-4 495M20 537L-2 517M-2 517L-20 506M-2 517L-22 517M20 537L12 510M12 510L17 492M12 510L20 493M66 530L57 500M57 500L41 483M57 500L50 481M66 530L65 495M65 495L54 475M65 495L58 469M47 537L30 514M30 514L27 493M30 514L25 494M47 537L43 508M43 508L47 488M43 508L42 487M59 520L47 486M47 486L45 461M47 486L37 466M59 520L74 486M74 486L69 458M74 486L79 463M74 486L75 459M59 520L73 494M73 494L84 476M73 494L88 481M35 522L4 494M4 494L-4 466M4 494L-1 463M35 522L8 499M8 499L-1 478M8 499L-10 485M40 534L11 531M11 531L-9 543M11 531L-5 518M40 534L28 507M28 507L16 493M28 507L18 489M28 507L28 488M40 534L24 507M24 507L6 491M24 507L22 488M60 518L31 499M31 499L19 479M31 499L11 487M60 518L63 485M63 485L71 464M63 485L54 463M63 485L78 468M56 527L55 497M55 497L42 483M55 497L43 480M55 497L64 480M56 527L42 500M42 500L33 484M42 500L30 483M56 527L62 494M62 494L70 472M62 494L50 475M109 521L102 491M102 491L113 472M102 491L100 472M109 521L117 492M117 492L118 472M117 492L114 472M96 521L88 485M88 485L74 465M88 485L91 464M96 521L86 485M86 485L81 459M86 485L80 459M99 523L109 495M109 495L125 481M109 495L114 474M109 495L121 481M99 523L104 495M104 495L113 479M104 495L117 481M165 542L191 524M191 524L210 525M191 524L201 507M165 542L191 528M191 528L201 512M191 528L197 508M165 542L196 535M196 535L217 546M196 535L217 543M128 525L136 493M136 493L155 479M136 493L147 470M128 525L137 498M137 498L148 481M137 498L147 480M164 533L186 509M186 509L203 489M186 509L191 488M186 509L210 502M164 533L190 518M190 518L207 509M190 518L206 506M95 523L63 506M63 506L43 495M63 506L54 486M95 523L82 490M82 490L69 469M82 490L78 464M82 490L72 465M95 523L94 487M94 487L83 468M94 487L93 464M139 518L156 483M156 483L178 467M156 483L156 457M156 483L176 465M139 518L155 482M155 482L165 456M155 482L148 457M163 519L178 493M178 493L196 479M178 493L185 476M178 493L184 473M163 519L159 483M159 483L167 460M159 483L164 458M130 519L136 480M136 480L154 463M136 480L152 461M130 519L123 482M123 482L133 455M123 482L115 454M123 482L111 462M170 515L162 484M162 484L149 463M162 484L152 466M170 515L154 485M154 485L152 464M154 485L157 460M154 485L158 462M186 525L212 504M212 504L215 478M212 504L224 482M186 525L183 491M183 491L187 470M183 491L173 467M165 522L148 489M148 489L132 474M148 489L125 474M165 522L141 503M141 503L128 486M141 503L121 494M141 503L128 484M214 528L243 516M243 516L263 519M243 516L263 511M243 516L262 522M214 528L217 499M217 499L234 485M217 499L221 478M217 499L211 481M189 512L197 482M197 482L205 466M197 482L214 468M189 512L180 475M180 475L177 451M180 475L167 452M190 508L185 475M185 475L183 453M185 475L184 453M190 508L185 473M185 473L170 451M185 473L177 447M212 514L203 480M203 480L206 455M203 480L183 467M212 514L216 476M216 476L225 450M216 476L205 455M251 527L271 503M271 503L273 478M271 503L270 479M251 527L250 500M250 500L262 486M250 500L242 482M254 527L257 495M257 495L272 478M257 495L262 473M254 527L261 495M261 495L261 473M261 495L276 477M254 527L283 516M283 516L297 500M283 516L305 514M222 514L215 484M215 484L222 461M215 484L216 463M222 514L202 492M202 492L190 472M202 492L188 477M222 514L204 492M204 492L191 479M204 492L190 480M266 521L292 512M292 512L305 495M292 512L313 515M266 521L293 507M293 507L313 499M293 507L304 491M240 506L218 478M218 478L217 456M218 478L211 457M240 506L243 468M243 468L253 445M243 468L228 443M243 511L219 490M219 490L209 472M219 490L202 475M243 511L222 490M222 490L218 467M222 490L208 475M243 511L241 479M241 479L236 457M241 479L248 458M241 479L249 457M266 522L278 495M278 495L290 480M278 495L283 476M278 495L275 475M266 522L281 501M281 501L293 491M281 501L279 484M281 501L293 487M256 518L277 501M277 501L293 499M277 501L292 491M256 518L248 491M248 491L248 470M248 491L253 471M256 518L265 494M265 494L265 478M265 494L282 485M269 526L250 506M250 506L233 496M250 506L242 491M269 526L254 505M254 505L251 487M254 505L247 490M291 525L280 502M280 502L273 486M280 502L269 487M291 525L290 497M290 497L294 480M290 497L288 477" stroke="#242a64" stroke-width="1.0" fill="none" stroke-linecap="round"/><path d="M6 577L35 540M6 577L-5 539M-3 576L9 531M-3 576L-23 535M15 576L27 534M15 576L13 533M28 577L10 538M28 577L20 537M55 576L66 530M55 576L47 537M68 567L59 520M68 567L35 522M75 568L40 534M75 568L60 518M75 568L56 527M91 568L109 521M91 568L96 521M91 568L99 523M130 569L165 542M130 569L128 525M130 569L164 533M120 569L95 523M120 569L139 518M152 567L163 519M152 567L130 519M164 565L170 515M164 565L186 525M188 563L165 522M188 563L214 528M195 561L189 512M195 561L190 508M195 561L212 514M223 560L251 527M223 560L254 527M239 557L222 514M239 557L266 521M250 555L240 506M250 555L243 511M250 558L266 522M250 558L256 518M289 561L269 526M289 561L291 525" stroke="#242a64" stroke-width="2.0" fill="none" stroke-linecap="round"/><path d="M-9 640L6 577M6 640L-3 576M23 640L15 576M42 640L28 577M53 640L55 576M71 640L68 567M83 640L75 568M103 640L91 568M116 640L130 569M135 640L120 569M154 640L152 567M165 637L164 565M181 634L188 563M195 630L195 561M211 627L223 560M230 624L239 557M249 621L250 555M260 618L250 558M281 614L289 561" stroke="#242a64" stroke-width="2.5" fill="none" stroke-linecap="round"/></g>
    <g filter="url(#bl2)">
      <path d="M-10 548 C50 552 120 565 180 582 C220 595 245 612 262 632 C230 650 190 662 120 674 C70 684 30 695 -10 705 Z" fill="#2c3270"/>
    </g>
    <g filter="url(#bl3)">
      <path d="M-10 575 C60 580 140 588 205 600 C235 608 255 622 262 640 C220 656 160 668 100 678 C60 686 30 700 -10 722 Z" fill="#12152e" opacity="0.92"/>
    </g>
    <g mask="url(#mk)"><rect x="0" y="410" width="331" height="250" fill="#1c2050" filter="url(#speck)" opacity="0.22"/></g>
    <rect x="0" y="660" width="331" height="175" fill="#1a2a70" filter="url(#speck2)" opacity="0.4"/>
  </svg>
  <div class="a si" style="left:49px;top:115px">基本用法</div>
  <svg class="a" style="left:12px;top:115px" width="26" height="24" viewBox="12 115 26 24"><defs><linearGradient id="roof" x1="0" y1="0" x2="0" y2="1"><stop offset="0" stop-color="#c8894a"/><stop offset="1" stop-color="#d9a868"/></linearGradient></defs><path d="M18.8 124 H31.5 V136.5 H18.8 Z" fill="#f2f2f2"/><path d="M22.3 129 H27.8 V136.5 H22.3 Z" fill="#8c8c8c"/><path d="M13 127 L24.9 116 L37 127 L34.5 129 L24.9 121 L15.5 129 Z" fill="url(#roof)" stroke="#c07a3a" stroke-width="0.8"/><path d="M13 134 Q16 132 19.5 133 V137.5 H13 Z M30.8 133 Q34 132 37 134 V137.5 H30.8 Z" fill="#4caf48"/></svg>
  <svg class="a" style="left:303px;top:118px" width="9" height="15" viewBox="0 0 9 15"><path d="M0 0 L9 7.5 L0 15 Z" fill="#fff"/></svg>
  <div class="a si" style="left:49px;top:184px">表单控件</div>
  <svg class="a" style="left:12px;top:184px" width="25" height="21" viewBox="12 184 25 21"><rect x="13.3" y="184.8" width="22" height="18.8" fill="#6f9ad2"/><rect x="13.3" y="184.8" width="22" height="4.5" fill="#86b2e4"/><rect x="14.5" y="189.3" width="19.6" height="13.3" fill="#f4f4f2"/><rect x="16" y="192" width="4.5" height="1.8" rx="0.9" fill="#4a7ed0"/><rect x="16" y="198" width="4.5" height="1.8" rx="0.9" fill="#4a7ed0"/><path d="M22.2 195 V190.8 H32.2" stroke="#c8c8c8" stroke-width="1.3" fill="none"/><path d="M22.2 201 V196.8 H32.2" stroke="#c8c8c8" stroke-width="1.3" fill="none"/></svg>
  <svg class="a" style="left:303px;top:187px" width="9" height="15" viewBox="0 0 9 15"><path d="M0 0 L9 7.5 L0 15 Z" fill="#fff"/></svg>
  <div class="a si" style="left:49px;top:252px">表格控件</div>
  <svg class="a" style="left:12px;top:253px" width="25" height="21" viewBox="12 253 25 21"><rect x="13.3" y="253.6" width="22" height="19" fill="#6f9ad2"/><rect x="13.3" y="253.6" width="22" height="4.5" fill="#86b2e4"/><rect x="14.5" y="258.1" width="19.6" height="13.5" fill="#f6f6f8"/><g fill="#b8b8b8"><rect x="16" y="259.8" width="4.6" height="1.6"/><rect x="22" y="259.8" width="4.6" height="1.6"/><rect x="28" y="259.8" width="4.6" height="1.6"/><rect x="16" y="262.8" width="4.6" height="1.6"/><rect x="22" y="262.8" width="4.6" height="1.6"/><rect x="28" y="262.8" width="4.6" height="1.6"/><rect x="16" y="265.8" width="4.6" height="1.6"/><rect x="22" y="265.8" width="4.6" height="1.6"/><rect x="28" y="265.8" width="4.6" height="1.6"/><rect x="16" y="268.8" width="4.6" height="1.6"/><rect x="22" y="268.8" width="4.6" height="1.6"/><rect x="28" y="268.8" width="4.6" height="1.6"/></g></svg>
  <svg class="a" style="left:303px;top:255px" width="9" height="15" viewBox="0 0 9 15"><path d="M0 0 L9 7.5 L0 15 Z" fill="#fff"/></svg>
  <div class="a si" style="left:49px;top:320px">更多控件</div>
  <svg class="a" style="left:12px;top:320px" width="26" height="24" viewBox="12 320 26 24"><path d="M17.8 325.8 L22.5 328.40000000000003 L17.8 331.0 L13.1 328.40000000000003 Z" fill="#8fcc80"/><path d="M13.1 328.40000000000003 L17.8 331.0 L17.8 338.4 L13.1 335.79999999999995 Z" fill="#b4dca6"/><path d="M17.8 331.0 L22.5 328.40000000000003 L22.5 335.79999999999995 L17.8 338.4 Z" fill="#5ea850"/><path d="M29.0 331.7 L36.1 334.7 L29.0 337.7 L21.9 334.7 Z" fill="#a4c0e0"/><path d="M21.9 334.7 L29.0 337.7 L29.0 342.7 L21.9 339.7 Z" fill="#b8d0ea"/><path d="M29.0 337.7 L36.1 334.7 L36.1 339.7 L29.0 342.7 Z" fill="#6a90c0"/><path d="M25.9 321.5 L33 324.7 L25.9 327.9 L18.8 324.7 Z" fill="#f07a70"/><path d="M18.8 324.7 L25.9 327.9 L25.9 334.2 L18.8 331.0 Z" fill="#f4a29a"/><path d="M25.9 327.9 L33 324.7 L33 331.0 L25.9 334.2 Z" fill="#e05a52"/></svg>
  <svg class="a" style="left:303px;top:323px" width="9" height="15" viewBox="0 0 9 15"><path d="M0 0 L9 7.5 L0 15 Z" fill="#fff"/></svg>
  <div class="a si" style="left:49px;top:389px">移动控件</div>
  <svg class="a" style="left:12px;top:387px" width="26" height="26" viewBox="12 387 26 26"><path d="M24.3 400.5 L17.4 411.7 H19.5 L24.3 404 L29 411.7 H31.2 Z" fill="#8c8c8c"/><rect x="23" y="401" width="2.6" height="1.2" fill="#f2e6d0"/><rect x="23" y="403.5" width="2.6" height="1.3" fill="#f2e6d0"/><path d="M14.9 404 V398 A9.6 9 0 0 1 34.1 398 V404" stroke="#f79448" stroke-width="3.8" fill="none"/><path d="M20.6 402 V400 A3.8 3.8 0 0 1 28.4 400 V402" stroke="#f28a3c" stroke-width="3.2" fill="none"/></svg>
  <svg class="a" style="left:303px;top:392px" width="9" height="15" viewBox="0 0 9 15"><path d="M0 0 L9 7.5 L0 15 Z" fill="#fff"/></svg>
  <div class="a si" style="left:49px;top:457px">页面布局</div>
  <svg class="a" style="left:15px;top:459px" width="20" height="20" viewBox="15 459 20 20"><rect x="15.9" y="459.9" width="18.2" height="18.2" fill="#eef2f6"/><rect x="18" y="462" width="14" height="4" fill="#a6c8ee"/><rect x="17.6" y="467.6" width="4.2" height="8.6" rx="0.6" fill="#3f72b6"/><rect x="23.6" y="467.6" width="8.6" height="8.6" rx="0.6" fill="#76c26a" stroke="#3f9a3a" stroke-width="0.8"/></svg>
  <svg class="a" style="left:303px;top:460px" width="9" height="15" viewBox="0 0 9 15"><path d="M0 0 L9 7.5 L0 15 Z" fill="#fff"/></svg>
  <div class="a si" style="left:49px;top:526px">内联框架</div>
  <svg class="a" style="left:12px;top:525px" width="26" height="24" viewBox="12 525 26 24"><rect x="13.1" y="525.9" width="18.9" height="15.3" fill="#7fa4d4"/><rect x="14.3" y="530" width="16.5" height="10.5" fill="#dfe4ec"/><rect x="18" y="532" width="18.7" height="15.7" fill="#7ea8dc"/><rect x="19.2" y="536.5" width="16.3" height="10.3" fill="#f6f8fc"/></svg>
  <svg class="a" style="left:300px;top:533px" width="16" height="9" viewBox="0 0 16 9"><path d="M0 0 H16 L8 8.5 Z" fill="#fff"/></svg>
  <div class="a" style="left:132.5px;top:391.5px;font-size:16.5px;line-height:18px;color:#f00010">Corp.</div>
  <div class="a" style="left:0;top:626px;width:328px;height:54px;background:rgba(165,165,165,0.26)"></div>
  <svg class="a" style="left:40px;top:585px" width="22" height="26" viewBox="0 0 22 26"><path d="M0 1.2 Q0 0 1.2 0 H13 L21.3 8.3 V24.8 Q21.3 26 20.1 26 H1.2 Q0 26 0 24.8 Z" fill="#fff"/><path d="M13.2 0.6 V7 Q13.2 8 14.2 8 H20.8" stroke="#9a9ab8" stroke-width="0.9" fill="none" opacity="0.6"/></svg>
  <div class="a si" style="left:76px;top:587px">弹出窗体（本页面或…</div>
  <svg class="a" style="left:40px;top:639px" width="22" height="26" viewBox="0 0 22 26"><path d="M0 1.2 Q0 0 1.2 0 H13 L21.3 8.3 V24.8 Q21.3 26 20.1 26 H1.2 Q0 26 0 24.8 Z" fill="#fff"/><path d="M13.2 0.6 V7 Q13.2 8 14.2 8 H20.8" stroke="#9a9ab8" stroke-width="0.9" fill="none" opacity="0.6"/></svg>
  <div class="a si" style="left:76px;top:641px">表格与编辑窗体</div>
  <svg class="a" style="left:40px;top:693px" width="22" height="26" viewBox="0 0 22 26"><path d="M0 1.2 Q0 0 1.2 0 H13 L21.3 8.3 V24.8 Q21.3 26 20.1 26 H1.2 Q0 26 0 24.8 Z" fill="#fff"/><path d="M13.2 0.6 V7 Q13.2 8 14.2 8 H20.8" stroke="#9a9ab8" stroke-width="0.9" fill="none" opacity="0.6"/></svg>
  <div class="a si" style="left:76px;top:695px">表格与编辑窗体（不…</div>
  <svg class="a" style="left:40px;top:747px" width="22" height="26" viewBox="0 0 22 26"><path d="M0 1.2 Q0 0 1.2 0 H13 L21.3 8.3 V24.8 Q21.3 26 20.1 26 H1.2 Q0 26 0 24.8 Z" fill="#fff"/><path d="M13.2 0.6 V7 Q13.2 8 14.2 8 H20.8" stroke="#9a9ab8" stroke-width="0.9" fill="none" opacity="0.6"/></svg>
  <div class="a si" style="left:76px;top:749px">子窗口向父窗口传值</div>
  <svg class="a" style="left:40px;top:801px" width="22" height="26" viewBox="0 0 22 26"><path d="M0 1.2 Q0 0 1.2 0 H13 L21.3 8.3 V24.8 Q21.3 26 20.1 26 H1.2 Q0 26 0 24.8 Z" fill="#fff"/><path d="M13.2 0.6 V7 Q13.2 8 14.2 8 H20.8" stroke="#9a9ab8" stroke-width="0.9" fill="none" opacity="0.6"/></svg>
  <div class="a si" style="left:76px;top:803px">子窗口向父窗口传值…</div>
</div>

<!-- MAIN -->
<div id="main" class="a"></div>
<div class="a" style="left:331px;top:160px;width:1211px;height:1px;background:#ddd"></div>
<svg class="a" style="left:357px;top:117px" width="22" height="18" viewBox="0 0 42 34"><path d="M21 1 L0.5 18 L3 21 L21 6.2 L39 21 L41.5 18 L35 12.6 L35 1 L29 1 L29 7.5 Z" fill="#888"/><path d="M6 21 L21 8.8 L36 21 L36 33 L25.5 33 L25.5 22.5 L16.5 22.5 L16.5 33 L6 33 Z" fill="#888"/></svg>
<div class="a t" style="left:384px;top:115px">首页</div>
<div class="a t" style="left:479px;top:115.5px;font-weight:bold;color:#6a48a0;letter-spacing:-0.5px">表格与编辑窗体</div>
<svg class="a" style="left:629px;top:105px" width="14" height="14" viewBox="0 0 14 14"><path d="M2 2 L12 12 M12 2 L2 12" stroke="#a58fc8" stroke-width="3.2" stroke-linecap="butt"/></svg>
<div class="a" style="left:453px;top:158px;width:205px;height:3px;background:#6b4a9f"></div>
<svg class="a" style="left:1364px;top:116px" width="26" height="19" viewBox="0 0 26 19"><path d="M7 3 L1.5 9.5 L7 16 M19 3 L24.5 9.5 L19 16 M15 1 L11 18" stroke="#b3b3b3" stroke-width="2.6" fill="none"/></svg>
<svg class="a" style="left:1412px;top:114px" width="21" height="21" viewBox="0 0 21 21"><path d="M2.5 8.5 A8.2 8.2 0 0 1 17 5" stroke="#b3b3b3" stroke-width="3.2" fill="none"/><path d="M20.5 1.5 V9 H13 Z" fill="#b3b3b3"/><path d="M18.5 12.5 A8.2 8.2 0 0 1 4 16" stroke="#b3b3b3" stroke-width="3.2" fill="none"/><path d="M0.5 19.5 V12 H8 Z" fill="#b3b3b3"/></svg>
<svg class="a" style="left:1456px;top:113px" width="25" height="23" viewBox="0 0 25 23"><path d="M3 22 C-1 14 1 5 12 5 H15 V0 L24.5 8 L15 16 V11 H12 C5 11 2 13 3 22 Z" fill="#b3b3b3"/></svg>
<svg class="a" style="left:1502px;top:114px" width="22" height="21" viewBox="0 0 22 21"><path d="M13 0 H21.5 V8.5 L18.5 5.5 L14 10 L11.5 7.5 L16 3 Z M0.5 12.5 V21 H9 L6 18 L10.5 13.5 L8 11 L3.5 15.5 Z" fill="#b3b3b3"/></svg>
<div class="a bd" style="left:346px;top:176px;width:579px;height:53px;border-radius:5px"></div>
<div class="a t" style="left:362px;top:192px;color:#999">输入要搜索的关键词</div>
<svg class="a" style="left:887px;top:190px" width="23" height="22" viewBox="0 0 23 22"><circle cx="9.5" cy="9.5" r="7.3" stroke="#777" stroke-width="3.6" fill="none"/><path d="M15 15 L21 21" stroke="#777" stroke-width="4" stroke-linecap="round"/></svg>
<div class="a bd" style="left:937px;top:176px;width:591px;height:53px;border-radius:5px"></div>
<div class="a t" style="left:953px;top:192px">过滤条件一</div>
<svg class="a" style="left:1493px;top:195px" width="16" height="10" viewBox="0 0 16 10"><path d="M0 0 H16 L8 9.5 Z" fill="#666"/></svg>
<div class="a bd" style="left:346px;top:240px;width:1182px;height:584px"></div>
<div class="a" style="left:347px;top:309px;width:1180px;height:1px;background:#ddd"></div>
<div class="a bd" style="left:355px;top:249px;width:171px;height:53px;border-radius:5px"></div>
<svg class="a" style="left:378px;top:265px" width="22" height="22" viewBox="0 0 22 22"><defs><radialGradient id="rgb" cx="0.5" cy="0.3" r="0.7"><stop offset="0" stop-color="#f7a49a"/><stop offset="1" stop-color="#e0473c"/></radialGradient></defs><circle cx="11" cy="11" r="10.3" fill="url(#rgb)" stroke="#d8534a" stroke-width="1"/><circle cx="11" cy="11" r="8.3" fill="none" stroke="#f7c3bd" stroke-width="0.8" opacity="0.7"/><rect x="6.3" y="9.6" width="9.4" height="3" fill="#fff"/></svg>
<div class="a t" style="left:406px;top:264px">删除选中项</div>
<div class="a bd" style="left:1368px;top:249px;width:152px;height:53px;border-radius:5px"></div>
<svg class="a" style="left:1391px;top:265px" width="22" height="22" viewBox="0 0 22 22"><defs><radialGradient id="gg" cx="0.5" cy="0.3" r="0.7"><stop offset="0" stop-color="#b8e0a0"/><stop offset="1" stop-color="#4aa33c"/></radialGradient></defs><circle cx="11" cy="11" r="10.3" fill="url(#gg)" stroke="#58a048" stroke-width="1"/><path d="M5.8 9.3 H9.3 V5.8 H12.7 V9.3 H16.2 V12.7 H12.7 V16.2 H9.3 V12.7 H5.8 Z" fill="#fff"/></svg>
<div class="a t" style="left:1419px;top:264px">新增用户</div>
<div class="a" style="left:358px;top:331px;width:18px;height:18px;border:2px solid #7c7c7c;border-radius:3px;background:#fff"></div>
<div class="a t" style="left:458px;top:333px">姓名</div>
<div class="a t" style="left:579px;top:333px">性别</div>
<div class="a t" style="left:698px;top:333px">入学年份</div>
<div class="a t" style="left:848px;top:333px">分组</div>
<div class="a t" style="left:968px;top:333px">所学专业</div>
<div class="a" style="left:347px;top:376px;width:1180px;height:1px;background:#ddd"></div>
<div class="a" style="left:347px;top:377px;width:1180px;height:54px;background:#fff"></div>
<div class="a" style="left:347px;top:431px;width:1180px;height:1px;background:#ddd"></div>
<div class="a" style="left:358px;top:392.5px;width:18px;height:18px;border:2px solid #7c7c7c;border-radius:3px;background:#fff"></div>
<div class="a t" style="left:419px;top:392px;color:#333">1</div>
<div class="a t" style="left:452px;top:392px;color:#333">张萍萍</div>
<div class="a t" style="left:572px;top:392px;color:#333">女</div>
<div class="a t" style="left:692px;top:392px;color:#333">2000</div>
<svg class="a" style="left:842px;top:392px" width="24" height="24" viewBox="0 0 24 24"><path d="M1 1 H11 L22.5 12.5 L12.5 22.5 L1 11 Z" fill="#fbfbfb" stroke="#bcbcbc" stroke-width="1.5" stroke-linejoin="round"/><circle cx="5.5" cy="5.5" r="1.6" fill="none" stroke="#aaa" stroke-width="1"/><path d="M10 7 L17 14 L13 18 L6 11 Z" fill="#8ccff8"/></svg>
<div class="a t" style="left:962px;top:392px;color:#333;text-decoration:underline">材料科学与工程系</div>
<svg class="a" style="left:1420px;top:390px" width="28" height="26" viewBox="0 0 28 26"><g transform="translate(2.5 23) rotate(-42)"><path d="M0.3 0 L6.5 -2.9 H22.5 V2.9 H6.5 Z" fill="#f2d85a" stroke="#c48a28" stroke-width="1" stroke-linejoin="round"/><path d="M6.8 -1.2 H22 V0.6 H6.8 Z" fill="#fff2a0" opacity="0.8"/><path d="M0.3 0 L6.5 -2.9 V2.9 Z" fill="#eec898" stroke="#c48a28" stroke-width="0.8" stroke-linejoin="round"/><path d="M0 0 L2.6 -1.2 V1.2 Z" fill="#4a2c0c"/><path d="M22.5 -2.9 H25.8 Q27.8 -2.9 27.8 0 Q27.8 2.9 25.8 2.9 H22.5 Z" fill="#f4dcc4" stroke="#c48a28" stroke-width="1"/></g></svg>
<svg class="a" style="left:1468px;top:393px" width="22" height="22" viewBox="0 0 22 22"><defs><radialGradient id="rgr0" cx="0.5" cy="0.3" r="0.7"><stop offset="0" stop-color="#f7a49a"/><stop offset="1" stop-color="#e0473c"/></radialGradient></defs><circle cx="11" cy="11" r="10.3" fill="url(#rgr0)" stroke="#d8534a" stroke-width="1"/><circle cx="11" cy="11" r="8.3" fill="none" stroke="#f7c3bd" stroke-width="0.8" opacity="0.7"/><rect x="6.3" y="9.6" width="9.4" height="3" fill="#fff"/></svg>
<div class="a" style="left:347px;top:432px;width:1180px;height:54px;background:#fafafa"></div>
<div class="a" style="left:347px;top:486px;width:1180px;height:1px;background:#ddd"></div>
<div class="a" style="left:358px;top:447.5px;width:18px;height:18px;border:2px solid #7c7c7c;border-radius:3px;background:#fff"></div>
<div class="a t" style="left:419px;top:447px;color:#333">2</div>
<div class="a t" style="left:452px;top:447px;color:#333">陈飞</div>
<div class="a t" style="left:572px;top:447px;color:#333">男</div>
<div class="a t" style="left:692px;top:447px;color:#333">2000</div>
<svg class="a" style="left:842px;top:447px" width="24" height="24" viewBox="0 0 24 24"><path d="M1 1 H11 L22.5 12.5 L12.5 22.5 L1 11 Z" fill="#fbfbfb" stroke="#bcbcbc" stroke-width="1.5" stroke-linejoin="round"/><circle cx="5.5" cy="5.5" r="1.6" fill="none" stroke="#aaa" stroke-width="1"/><path d="M10 7 L17 14 L13 18 L6 11 Z" fill="#8ccff8"/></svg>
<div class="a t" style="left:962px;top:447px;color:#333;text-decoration:underline">化学系</div>
<svg class="a" style="left:1420px;top:445px" width="28" height="26" viewBox="0 0 28 26"><g transform="translate(2.5 23) rotate(-42)"><path d="M0.3 0 L6.5 -2.9 H22.5 V2.9 H6.5 Z" fill="#f2d85a" stroke="#c48a28" stroke-width="1" stroke-linejoin="round"/><path d="M6.8 -1.2 H22 V0.6 H6.8 Z" fill="#fff2a0" opacity="0.8"/><path d="M0.3 0 L6.5 -2.9 V2.9 Z" fill="#eec898" stroke="#c48a28" stroke-width="0.8" stroke-linejoin="round"/><path d="M0 0 L2.6 -1.2 V1.2 Z" fill="#4a2c0c"/><path d="M22.5 -2.9 H25.8 Q27.8 -2.9 27.8 0 Q27.8 2.9 25.8 2.9 H22.5 Z" fill="#f4dcc4" stroke="#c48a28" stroke-width="1"/></g></svg>
<svg class="a" style="left:1468px;top:448px" width="22" height="22" viewBox="0 0 22 22"><defs><radialGradient id="rgr1" cx="0.5" cy="0.3" r="0.7"><stop offset="0" stop-color="#f7a49a"/><stop offset="1" stop-color="#e0473c"/></radialGradient></defs><circle cx="11" cy="11" r="10.3" fill="url(#rgr1)" stroke="#d8534a" stroke-width="1"/><circle cx="11" cy="11" r="8.3" fill="none" stroke="#f7c3bd" stroke-width="0.8" opacity="0.7"/><rect x="6.3" y="9.6" width="9.4" height="3" fill="#fff"/></svg>
<div class="a" style="left:347px;top:487px;width:1180px;height:54px;background:#fff"></div>
<div class="a" style="left:347px;top:541px;width:1180px;height:1px;background:#ddd"></div>
<div class="a" style="left:358px;top:502.5px;width:18px;height:18px;border:2px solid #7c7c7c;border-radius:3px;background:#fff"></div>
<div class="a t" style="left:419px;top:502px;color:#333">3</div>
<div class="a t" style="left:452px;top:502px;color:#333">董婷婷</div>
<div class="a t" style="left:572px;top:502px;color:#333">女</div>
<div class="a t" style="left:692px;top:502px;color:#333">2000</div>
<svg class="a" style="left:842px;top:502px" width="24" height="24" viewBox="0 0 24 24"><path d="M1 1 H11 L22.5 12.5 L12.5 22.5 L1 11 Z" fill="#fbfbfb" stroke="#bcbcbc" stroke-width="1.5" stroke-linejoin="round"/><circle cx="5.5" cy="5.5" r="1.6" fill="none" stroke="#aaa" stroke-width="1"/><path d="M10 7 L17 14 L13 18 L6 11 Z" fill="#8cbf74"/></svg>
<div class="a t" style="left:962px;top:502px;color:#333;text-decoration:underline">化学系</div>
<svg class="a" style="left:1420px;top:500px" width="28" height="26" viewBox="0 0 28 26"><g transform="translate(2.5 23) rotate(-42)"><path d="M0.3 0 L6.5 -2.9 H22.5 V2.9 H6.5 Z" fill="#f2d85a" stroke="#c48a28" stroke-width="1" stroke-linejoin="round"/><path d="M6.8 -1.2 H22 V0.6 H6.8 Z" fill="#fff2a0" opacity="0.8"/><path d="M0.3 0 L6.5 -2.9 V2.9 Z" fill="#eec898" stroke="#c48a28" stroke-width="0.8" stroke-linejoin="round"/><path d="M0 0 L2.6 -1.2 V1.2 Z" fill="#4a2c0c"/><path d="M22.5 -2.9 H25.8 Q27.8 -2.9 27.8 0 Q27.8 2.9 25.8 2.9 H22.5 Z" fill="#f4dcc4" stroke="#c48a28" stroke-width="1"/></g></svg>
<svg class="a" style="left:1468px;top:503px" width="22" height="22" viewBox="0 0 22 22"><defs><radialGradient id="rgr2" cx="0.5" cy="0.3" r="0.7"><stop offset="0" stop-color="#f7a49a"/><stop offset="1" stop-color="#e0473c"/></radialGradient></defs><circle cx="11" cy="11" r="10.3" fill="url(#rgr2)" stroke="#d8534a" stroke-width="1"/><circle cx="11" cy="11" r="8.3" fill="none" stroke="#f7c3bd" stroke-width="0.8" opacity="0.7"/><rect x="6.3" y="9.6" width="9.4" height="3" fill="#fff"/></svg>
<div class="a" style="left:347px;top:542px;width:1180px;height:54px;background:#f5f5f5"></div>
<div class="a" style="left:347px;top:596px;width:1180px;height:1px;background:#ddd"></div>
<div class="a" style="left:358px;top:557.5px;width:18px;height:18px;border:2px solid #6a4a9e;border-radius:3px;background:#fff"></div>
<div class="a t" style="left:419px;top:557px;color:#6a4a9e">4</div>
<div class="a t" style="left:452px;top:557px;color:#6a4a9e">刘国</div>
<div class="a t" style="left:572px;top:557px;color:#6a4a9e">男</div>
<div class="a t" style="left:692px;top:557px;color:#6a4a9e">2002</div>
<svg class="a" style="left:842px;top:557px" width="24" height="24" viewBox="0 0 24 24"><path d="M1 1 H11 L22.5 12.5 L12.5 22.5 L1 11 Z" fill="#fbfbfb" stroke="#bcbcbc" stroke-width="1.5" stroke-linejoin="round"/><circle cx="5.5" cy="5.5" r="1.6" fill="none" stroke="#aaa" stroke-width="1"/><path d="M10 7 L17 14 L13 18 L6 11 Z" fill="#8cbf74"/></svg>
<div class="a t" style="left:962px;top:557px;color:#6a4a9e;text-decoration:underline">化学系</div>
<svg class="a" style="left:1420px;top:555px" width="28" height="26" viewBox="0 0 28 26"><g transform="translate(2.5 23) rotate(-42)"><path d="M0.3 0 L6.5 -2.9 H22.5 V2.9 H6.5 Z" fill="#f2d85a" stroke="#c48a28" stroke-width="1" stroke-linejoin="round"/><path d="M6.8 -1.2 H22 V0.6 H6.8 Z" fill="#fff2a0" opacity="0.8"/><path d="M0.3 0 L6.5 -2.9 V2.9 Z" fill="#eec898" stroke="#c48a28" stroke-width="0.8" stroke-linejoin="round"/><path d="M0 0 L2.6 -1.2 V1.2 Z" fill="#4a2c0c"/><path d="M22.5 -2.9 H25.8 Q27.8 -2.9 27.8 0 Q27.8 2.9 25.8 2.9 H22.5 Z" fill="#f4dcc4" stroke="#c48a28" stroke-width="1"/></g></svg>
<svg class="a" style="left:1468px;top:558px" width="22" height="22" viewBox="0 0 22 22"><defs><radialGradient id="rgr3" cx="0.5" cy="0.3" r="0.7"><stop offset="0" stop-color="#f7a49a"/><stop offset="1" stop-color="#e0473c"/></radialGradient></defs><circle cx="11" cy="11" r="10.3" fill="url(#rgr3)" stroke="#d8534a" stroke-width="1"/><circle cx="11" cy="11" r="8.3" fill="none" stroke="#f7c3bd" stroke-width="0.8" opacity="0.7"/><rect x="6.3" y="9.6" width="9.4" height="3" fill="#fff"/></svg>
<div class="a" style="left:347px;top:597px;width:1180px;height:54px;background:#fff"></div>
<div class="a" style="left:347px;top:651px;width:1180px;height:1px;background:#ddd"></div>
<div class="a" style="left:358px;top:612.5px;width:18px;height:18px;border:2px solid #7c7c7c;border-radius:3px;background:#fff"></div>
<div class="a t" style="left:419px;top:612px;color:#333">5</div>
<div class="a t" style="left:452px;top:612px;color:#333">康颖颖</div>
<div class="a t" style="left:572px;top:612px;color:#333">女</div>
<div class="a t" style="left:692px;top:612px;color:#333">2008</div>
<svg class="a" style="left:842px;top:612px" width="24" height="24" viewBox="0 0 24 24"><path d="M1 1 H11 L22.5 12.5 L12.5 22.5 L1 11 Z" fill="#fbfbfb" stroke="#bcbcbc" stroke-width="1.5" stroke-linejoin="round"/><circle cx="5.5" cy="5.5" r="1.6" fill="none" stroke="#aaa" stroke-width="1"/><path d="M10 7 L17 14 L13 18 L6 11 Z" fill="#f8b07a"/></svg>
<div class="a t" style="left:962px;top:612px;color:#333;text-decoration:underline">数学系</div>
<svg class="a" style="left:1420px;top:610px" width="28" height="26" viewBox="0 0 28 26"><g transform="translate(2.5 23) rotate(-42)"><path d="M0.3 0 L6.5 -2.9 H22.5 V2.9 H6.5 Z" fill="#f2d85a" stroke="#c48a28" stroke-width="1" stroke-linejoin="round"/><path d="M6.8 -1.2 H22 V0.6 H6.8 Z" fill="#fff2a0" opacity="0.8"/><path d="M0.3 0 L6.5 -2.9 V2.9 Z" fill="#eec898" stroke="#c48a28" stroke-width="0.8" stroke-linejoin="round"/><path d="M0 0 L2.6 -1.2 V1.2 Z" fill="#4a2c0c"/><path d="M22.5 -2.9 H25.8 Q27.8 -2.9 27.8 0 Q27.8 2.9 25.8 2.9 H22.5 Z" fill="#f4dcc4" stroke="#c48a28" stroke-width="1"/></g></svg>
<svg class="a" style="left:1468px;top:613px" width="22" height="22" viewBox="0 0 22 22"><defs><radialGradient id="rgr4" cx="0.5" cy="0.3" r="0.7"><stop offset="0" stop-color="#f7a49a"/><stop offset="1" stop-color="#e0473c"/></radialGradient></defs><circle cx="11" cy="11" r="10.3" fill="url(#rgr4)" stroke="#d8534a" stroke-width="1"/><circle cx="11" cy="11" r="8.3" fill="none" stroke="#f7c3bd" stroke-width="0.8" opacity="0.7"/><rect x="6.3" y="9.6" width="9.4" height="3" fill="#fff"/></svg>
<div class="a" style="left:347px;top:753px;width:1180px;height:1px;background:#ddd"></div>
<svg class="a" style="left:380px;top:780px" width="19" height="16" viewBox="0 0 19 16"><path d="M9 1 L2.5 8 L9 15 M17 1 L10.5 8 L17 15" stroke="#c4c4c4" stroke-width="2.6" fill="none"/></svg>
<svg class="a" style="left:462px;top:780px" width="13" height="16" viewBox="0 0 13 16"><path d="M11 1 L3.5 8 L11 15" stroke="#c4c4c4" stroke-width="2.8" fill="none"/></svg>
<div class="a" style="left:514px;top:769px;width:1px;height:39px;background:#ccc"></div>
<div class="a t" style="left:527px;top:777px">第</div>
<div class="a bd" style="left:559px;top:762px;width:54px;height:53px;border-radius:6px"></div>
<div class="a t" style="left:575px;top:777px">1</div>
<div class="a t" style="left:624px;top:777px">页，共 3 页</div>
<div class="a" style="left:736px;top:769px;width:1px;height:39px;background:#ccc"></div>
<svg class="a" style="left:777px;top:779px" width="13" height="18" viewBox="0 0 13 18"><path d="M2 1.5 L10 9 L2 16.5" stroke="#888" stroke-width="3" fill="none"/></svg>
<svg class="a" style="left:853px;top:779px" width="19" height="18" viewBox="0 0 19 18"><path d="M2 1.5 L9 9 L2 16.5 M9.5 1.5 L16.5 9 L9.5 16.5" stroke="#888" stroke-width="2.8" fill="none"/></svg>
<div class="a t" style="left:1320px;top:777px">显示 1 - 5 条，共 12 条</div>
</body></html>
